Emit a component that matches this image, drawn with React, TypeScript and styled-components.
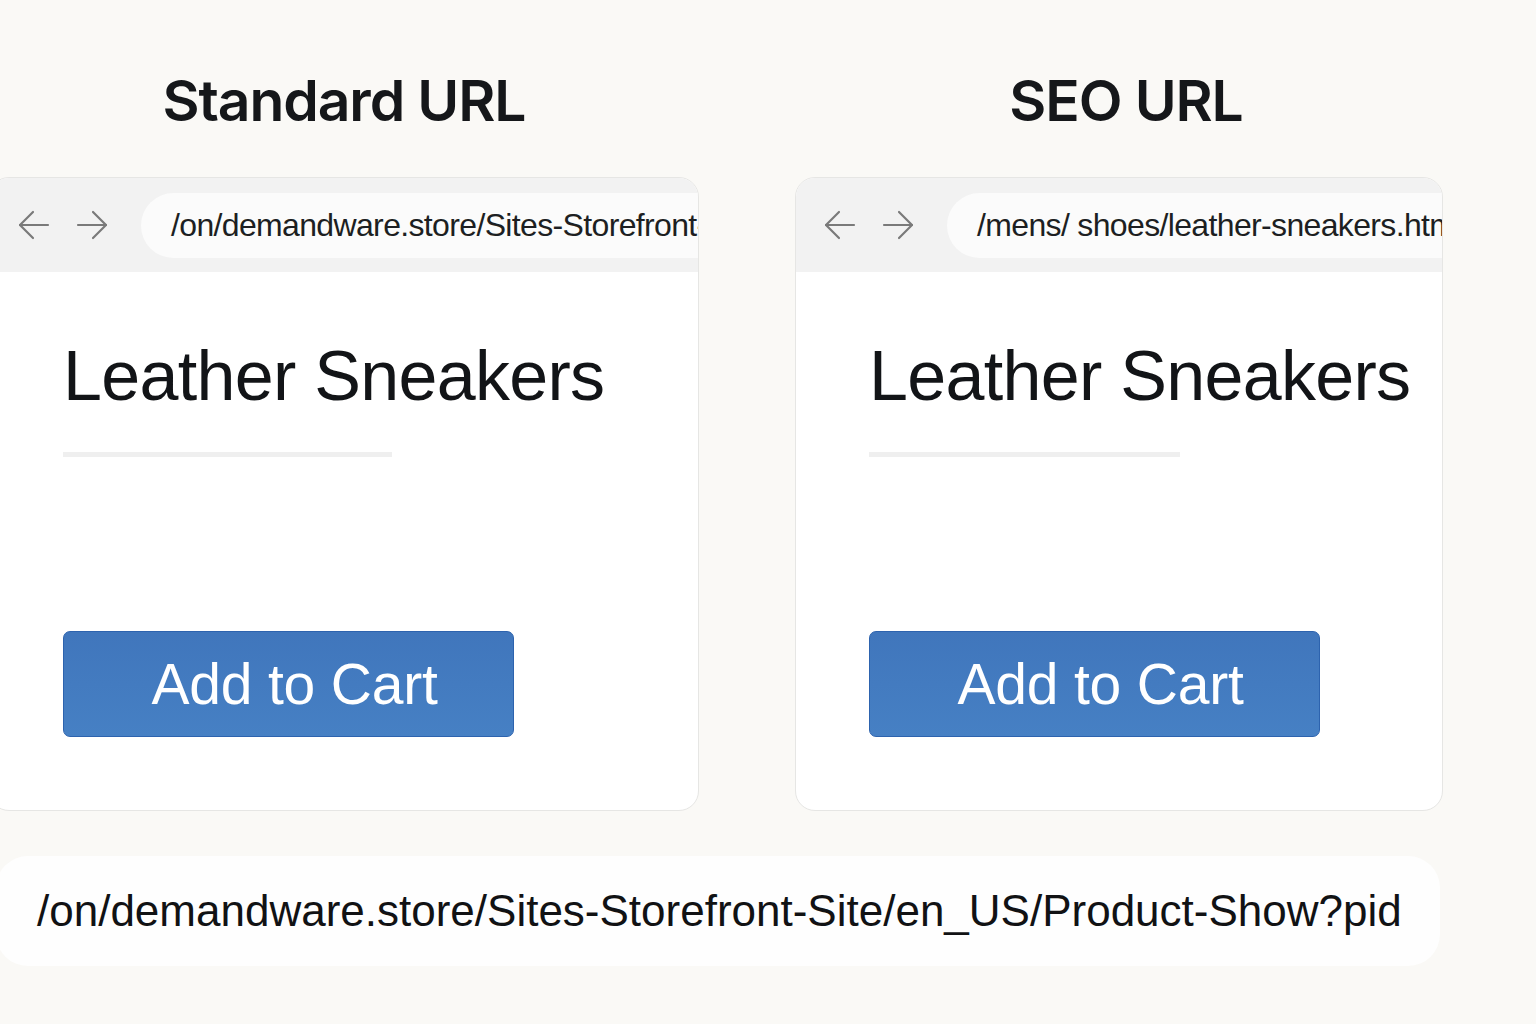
import React from "react";
import styled, { createGlobalStyle } from "styled-components";

const Global = createGlobalStyle`
  html, body { margin: 0; padding: 0; background: #faf9f6; }
  body { width: 1536px; height: 1024px; overflow: hidden; font-family: "Liberation Sans", Arial, sans-serif; }
`;

const Page = styled.div`
  width: 1536px;
  height: 1024px;
  box-sizing: border-box;
  padding-top: 66px;
  overflow: hidden;
`;

const Columns = styled.div`
  display: grid;
  grid-template-columns: 710px 648px;
  column-gap: 96px;
  margin-left: -11px;
`;

const Column = styled.div`
  display: flex;
  flex-direction: column;
  align-items: stretch;
`;

const Heading = styled.h2<{ $shift?: number }>`
  margin: 0 0 41px;
  height: 70px;
  line-height: 70px;
  text-align: center;
  font-family: Inter, "Liberation Sans", sans-serif;
  font-weight: 600;
  font-size: 57px;
  letter-spacing: -1.1px;
  color: #15171a;
  transform: translateX(${(p) => p.$shift ?? 0}px);
`;

const Card = styled.div`
  height: 634px;
  box-sizing: border-box;
  background: #ffffff;
  border: 1px solid #e6e6e4;
  border-radius: 20px;
  overflow: hidden;
  display: flex;
  flex-direction: column;
`;

const Toolbar = styled.div`
  height: 94px;
  flex: none;
  background: #f2f2f2;
  display: flex;
  align-items: center;
  padding-left: 28px;
  gap: 26px;
`;

const NavIcon = styled.svg`
  width: 32px;
  height: 34px;
  flex: none;
  color: #7a7a7a;
`;

const UrlPill = styled.div`
  flex: none;
  margin-left: 7px;
  width: 760px;
  height: 65px;
  border-radius: 33px;
  background: #fbfbfb;
  display: flex;
  align-items: center;
  padding-left: 30px;
  box-sizing: border-box;
  font-size: 32px;
  letter-spacing: -0.65px;
  color: #1d1f22;
  white-space: nowrap;
  overflow: hidden;
`;

const Body = styled.div`
  padding: 69px 0 0 73px;
  display: flex;
  flex-direction: column;
  align-items: flex-start;
`;

const ProductTitle = styled.h1`
  margin: 0;
  font-size: 70px;
  line-height: 70px;
  font-weight: 400;
  letter-spacing: -0.7px;
  color: #121417;
`;

const Rule = styled.div<{ $w: number }>`
  margin-top: 41px;
  height: 5px;
  width: ${(p) => p.$w}px;
  background: #efefef;
`;

const CartButton = styled.button`
  margin-top: 174px;
  width: 451px;
  height: 106px;
  box-sizing: border-box;
  border: 1px solid #2d63ae;
  border-radius: 7px;
  background: linear-gradient(180deg, #4076bc 0%, #4680c4 100%);
  color: #ffffff;
  font-family: "Liberation Sans", Arial, sans-serif;
  font-size: 57px;
  letter-spacing: -0.2px;
  padding: 0 0 0 12px;
  cursor: pointer;
`;

const UrlBar = styled.div`
  margin-top: 45px;
  margin-left: -4px;
  width: 1444px;
  height: 110px;
  box-sizing: border-box;
  border-radius: 32px;
  background: #fefefe;
  display: flex;
  align-items: center;
  padding-left: 41px;
  font-size: 44px;
  color: #111214;
  white-space: nowrap;
`;

const Arrow = ({ dir }: { dir: "left" | "right" }) => (
  <NavIcon viewBox="0 0 32 34" fill="none" stroke="currentColor" strokeWidth={2.2} strokeLinecap="round" strokeLinejoin="round">
    {dir === "left" ? (
      <>
        <path d="M30 17H2" />
        <path d="M15 4L2 17l13 13" />
      </>
    ) : (
      <>
        <path d="M2 17h28" />
        <path d="M17 4l13 13-13 13" />
      </>
    )}
  </NavIcon>
);

const Browser = ({ url, rule }: { url: string; rule: number }) => (
  <Card>
    <Toolbar>
      <Arrow dir="left" />
      <Arrow dir="right" />
      <UrlPill>{url}</UrlPill>
    </Toolbar>
    <Body>
      <ProductTitle>Leather Sneakers</ProductTitle>
      <Rule $w={rule} />
      <CartButton>Add to Cart</CartButton>
    </Body>
  </Card>
);

export default function App() {
  return (
    <Page>
      <Global />
      <Columns>
        <Column>
          <Heading>Standard URL</Heading>
          <Browser url="/on/demandware.store/Sites-Storefront-Site/en_US/Product-Show?pid" rule={329} />
        </Column>
        <Column>
          <Heading $shift={7}>SEO URL</Heading>
          <Browser url="/mens/ shoes/leather-sneakers.html" rule={311} />
        </Column>
      </Columns>
      <UrlBar>/on/demandware.store/Sites-Storefront-Site/en_US/Product-Show?pid</UrlBar>
    </Page>
  );
}
